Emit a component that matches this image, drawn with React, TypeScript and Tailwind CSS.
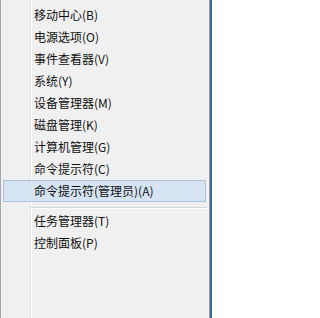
import React from "react";

const TOP_ITEMS = [
  "移动中心(B)",
  "电源选项(O)",
  "事件查看器(V)",
  "系统(Y)",
  "设备管理器(M)",
  "磁盘管理(K)",
  "计算机管理(G)",
  "命令提示符(C)",
  "命令提示符(管理员)(A)",
];

const BOTTOM_ITEMS = ["任务管理器(T)", "控制面板(P)"];
const ACTIVE = "命令提示符(管理员)(A)";

function MenuItem({ label }: { label: string }) {
  const active = label === ACTIVE;
  return (
    <div
      className={`h-[22px] flex items-center ml-[2px] mr-[3px] pl-[30px] border ${
        active ? "bg-[#d5e3f3] border-[#a9c2e0]" : "border-transparent"
      }`}
    >
      <span className="text-[12px] leading-none text-[#111]">{label}</span>
    </div>
  );
}

export default function App() {
  return (
    <div
      className="w-[212px] h-[318px] flex bg-[#3c6a9a] overflow-hidden"
      style={{ fontFamily: '"Noto Sans CJK SC", "Microsoft YaHei", sans-serif' }}
    >
      <div className="w-[210px] h-full bg-[#f0f0f0] border-l border-[#a8a8a8] border-r border-r-[#979797] pt-[4px] bg-[linear-gradient(to_right,transparent_29px,#e2e3e3_29px,#e2e3e3_30px,#ffffff_30px,#ffffff_31px,transparent_31px)]">
        {TOP_ITEMS.map((item) => (
          <MenuItem key={item} label={item} />
        ))}

        {/* separator */}
        <div className="h-[8px] pt-[5px] pl-[29px] pr-[2px]">
          <div className="h-px bg-[#d7d7d7]" />
          <div className="h-px bg-white" />
        </div>

        {BOTTOM_ITEMS.map((item) => (
          <MenuItem key={item} label={item} />
        ))}
      </div>
    </div>
  );
}
